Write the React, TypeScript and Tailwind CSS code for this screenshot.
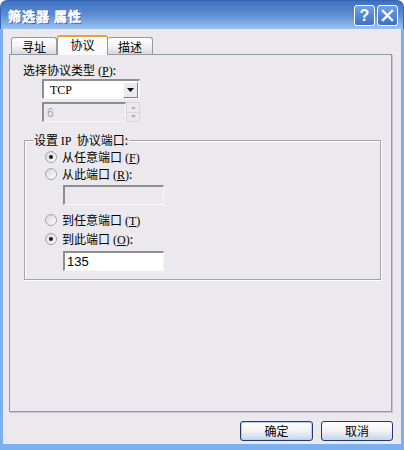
import React from "react";

function Radio({ checked }: { checked?: boolean }) {
  return (
    <div className="w-[12px] h-[12px] rounded-full border border-[#a4a4a8] bg-linear-to-br from-[#d6d6d8] to-white flex items-center justify-center shrink-0">
      {checked && <div className="w-[4px] h-[4px] rounded-full bg-[#1a1a1a]" />}
    </div>
  );
}

function Mn({ c }: { c: string }) {
  return (
    <span className="font-['Liberation_Serif',serif] text-[12px]">
      &nbsp;(<span className="underline underline-offset-1">{c}</span>)
    </span>
  );
}

function Sunken({ className, children }: { className?: string; children?: React.ReactNode }) {
  return (
    <div className={"border-t-2 border-l-2 border-t-[#8e8e92] border-l-[#8e8e92] border-b border-r border-b-[#f8f8f8] border-r-[#f8f8f8] " + (className ?? "")}>
      {children}
    </div>
  );
}

export default function App() {
  return (
    <div className="w-[404px] h-[450px] flex flex-col bg-white font-['Noto_Sans_CJK_SC',sans-serif] text-[12px] text-black">
      {/* Title bar */}
      <div className="h-[29px] shrink-0 rounded-t-[7px] bg-linear-to-b from-[#3f71c0] via-[#5d8dd3] to-[#9cc3f2] flex items-center pl-[7px] pr-[5px] border-t border-x border-[#3466b8]">
        <div className="text-white font-bold text-[13px] leading-none tracking-[1px] [-webkit-text-stroke:0.5px_white] [text-shadow:1px_1px_0_#2a4f90]">
          筛选器&nbsp;属性
        </div>
        <div className="ml-auto flex gap-[2px] mt-[1px]">
          <div className="w-[21px] h-[21px] rounded-[3px] border border-white bg-linear-to-b from-[#6f9fe6] to-[#3e6fc6] flex items-center justify-center">
            <span className="text-white font-bold text-[16px] leading-none font-['Liberation_Sans',sans-serif]">?</span>
          </div>
          <div className="w-[21px] h-[21px] rounded-[3px] border border-white bg-linear-to-b from-[#6f9fe6] to-[#3e6fc6] flex items-center justify-center">
            <svg width="13" height="13" viewBox="0 0 13 13">
              <path d="M2 2 L11 11 M11 2 L2 11" stroke="white" strokeWidth="2.4" strokeLinecap="square" />
            </svg>
          </div>
        </div>
      </div>

      {/* Body */}
      <div className="flex-1 flex flex-col bg-[#ebe9ed] border-l-[3px] border-r-[3px] border-b-[6px] border-[#7bafef]">
        <div className="pt-[6px] pl-[6px] pr-[9px] flex flex-col">
          {/* Tabs */}
          <div className="relative z-10 flex items-end h-[20px] -mb-[1px] pl-[2px]">
            <div className="w-[46px] h-[17px] mb-[1px] border border-b-0 border-[#919b9c] rounded-t-[3px] bg-linear-to-b from-white via-[#f3f3f6] to-[#d4d8e4] flex items-end justify-center text-[12px] leading-[14px]">
              寻址
            </div>
            <div className="w-[51px] h-[20px] border-x border-[#919b9c] border-t-[2px] border-t-[#e8a33c] rounded-t-[3px] bg-[#fbfbfd] flex items-start justify-center pt-[1px] text-[12px] leading-[14px]">
              协议
            </div>
            <div className="w-[45px] h-[17px] mb-[1px] border border-b-0 border-l-0 border-[#919b9c] rounded-t-[3px] bg-linear-to-b from-white via-[#f3f3f6] to-[#d4d8e4] flex items-end justify-center text-[12px] leading-[14px]">
              描述
            </div>
          </div>

          {/* Panel */}
          <div className="h-[358px] border border-[#919b9c] shadow-[1px_1px_0_#c5c7cf] flex flex-col pl-[13px] pt-[9px]">
            <div className="leading-[12px] h-[12px]">
              选择协议类型<Mn c="P" />:
            </div>

            {/* Select */}
            <Sunken className="ml-[19px] mt-[3px] w-[98px] h-[20px] bg-white flex items-center">
              <span className="pl-[6px] flex-1 font-['Liberation_Serif',serif] text-[12px] leading-none">TCP</span>
              <div className="w-[15px] h-[16px] mr-[1px] bg-[#ebe9ed] border border-t-white border-l-white border-b-[#808080] border-r-[#808080] flex items-center justify-center">
                <svg width="7" height="4" viewBox="0 0 7 4">
                  <path d="M0 0 H7 L3.5 4 Z" fill="#000" />
                </svg>
              </div>
            </Sunken>

            {/* Disabled spin input */}
            <div className="ml-[19px] mt-[3px] flex w-[98px] h-[20px]">
              <Sunken className="flex-1 bg-[#ebe9ed] flex items-center">
                <span className="pl-[3px] text-[#a8a8ab] font-['Liberation_Sans',sans-serif] text-[12px] leading-none">6</span>
              </Sunken>
              <div className="w-[14px] flex flex-col">
                <div className="flex-1 border border-[#d6d6da] bg-[#ebe9ed] flex items-center justify-center">
                  <svg width="5" height="3" viewBox="0 0 5 3"><path d="M0 3 H5 L2.5 0 Z" fill="#b0b0b4" /></svg>
                </div>
                <div className="flex-1 border border-t-0 border-[#d6d6da] bg-[#ebe9ed] flex items-center justify-center">
                  <svg width="5" height="3" viewBox="0 0 5 3"><path d="M0 0 H5 L2.5 3 Z" fill="#b0b0b4" /></svg>
                </div>
              </div>
            </div>

            {/* Group box */}
            <div className="relative ml-[1px] mt-[18px] w-[357px] h-[140px] border border-[#a3a3a8] shadow-[inset_1px_1px_0_white,1px_1px_0_white] flex flex-col pt-[9px]">
              <div className="absolute -top-[7px] left-[8px] px-[1px] bg-[#ebe9ed] leading-[12px]">
                设置&nbsp;<span className="font-['Liberation_Serif',serif]">IP</span>&nbsp;&nbsp;协议端口:
              </div>

              <div className="flex items-center h-[14px] pl-[20px] gap-[5px]">
                <Radio checked />
                <span className="leading-[12px]">从任意端口<Mn c="F" /></span>
              </div>
              <div className="flex items-center h-[14px] pl-[20px] gap-[5px] mt-[3px]">
                <Radio />
                <span className="leading-[12px]">从此端口<Mn c="R" />:</span>
              </div>
              <Sunken className="ml-[38px] mt-[4px] w-[101px] h-[20px] bg-[#ebe9ed]" />
              <div className="flex items-center h-[14px] pl-[20px] gap-[5px] mt-[8px]">
                <Radio />
                <span className="leading-[12px]">到任意端口<Mn c="T" /></span>
              </div>
              <div className="flex items-center h-[14px] pl-[20px] gap-[5px] mt-[5px]">
                <Radio checked />
                <span className="leading-[12px]">到此端口<Mn c="O" />:</span>
              </div>
              <Sunken className="ml-[38px] mt-[5px] w-[101px] h-[20px] bg-white flex items-center">
                <span className="pl-[2px] font-['Liberation_Sans',sans-serif] text-[13px] leading-none">135</span>
              </Sunken>
            </div>
          </div>

          {/* Buttons */}
          <div className="flex justify-end gap-[8px] mt-[9px] mr-[-1px]">
            <div className="w-[73px] h-[20px] rounded-[3px] border border-[#1f3b6e] bg-linear-to-b from-white via-[#f2f2f6] to-[#c9d3e6] shadow-[inset_0_0_0_1px_#b9cdf0] flex items-center justify-center leading-none">
              确定
            </div>
            <div className="w-[72px] h-[20px] rounded-[3px] border border-[#1f3b6e] bg-linear-to-b from-white via-[#f2f2f6] to-[#c9d3e6] flex items-center justify-center leading-none">
              取消
            </div>
          </div>
        </div>
      </div>
    </div>
  );
}
